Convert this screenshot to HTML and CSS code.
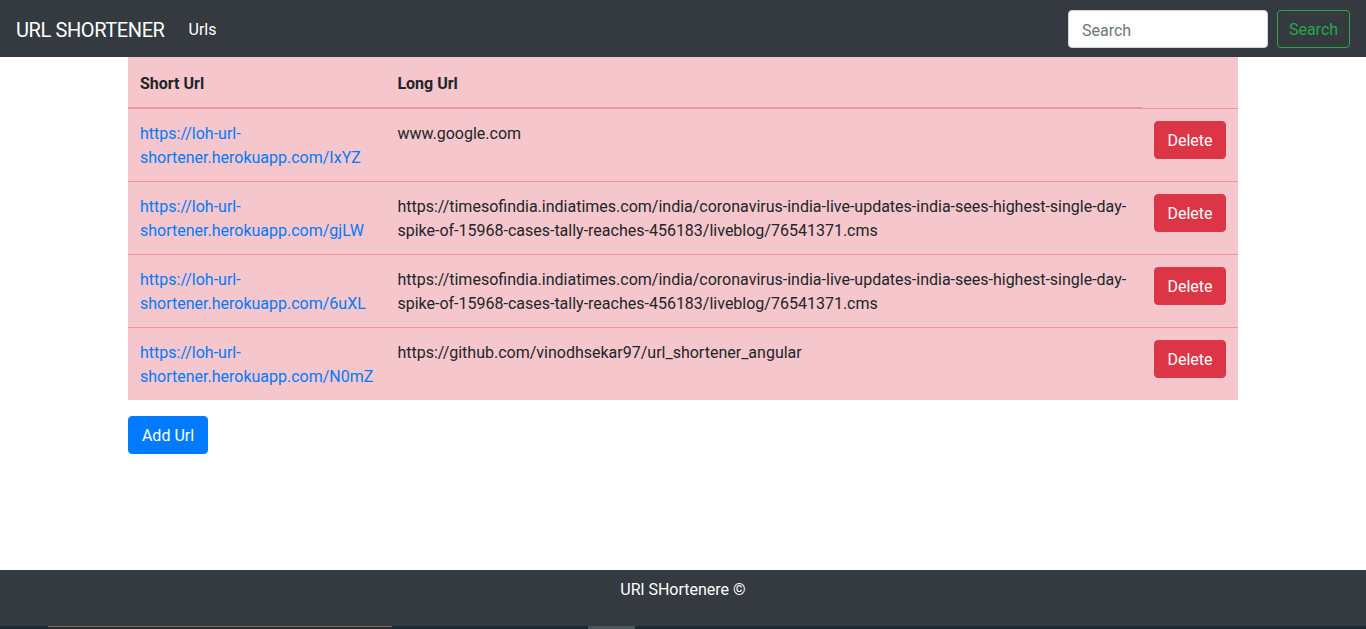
FILE: index.html
```html
<!DOCTYPE html>
<html lang="en">
<head>
<meta charset="utf-8">
<title>URL SHORTENER</title>
<link rel="stylesheet" href="styles.css">
</head>
<body>
<nav class="navbar">
  <a class="brand" href="#">URL SHORTENER</a>
  <ul class="nav">
    <li><a class="nav-link" href="#">Urls</a></li>
  </ul>
  <form class="search">
    <input class="search-input" type="text" placeholder="Search">
    <button class="btn btn-outline-success" type="button">Search</button>
  </form>
</nav>
<main class="container">
  <table class="table">
    <colgroup>
      <col class="col-short">
      <col class="col-long">
      <col class="col-action">
    </colgroup>
    <thead>
      <tr><th>Short Url</th><th>Long Url</th></tr>
    </thead>
    <tbody>
      <tr>
        <td><a href="#">https://loh-url-shortener.herokuapp.com/IxYZ</a></td>
        <td>www.google.com</td>
        <td><button class="btn btn-danger" type="button">Delete</button></td>
      </tr>
      <tr>
        <td><a href="#">https://loh-url-shortener.herokuapp.com/gjLW</a></td>
        <td>https://timesofindia.indiatimes.com/india/coronavirus-india-live-updates-india-sees-highest-single-day-spike-of-15968-cases-tally-reaches-456183/liveblog/76541371.cms</td>
        <td><button class="btn btn-danger" type="button">Delete</button></td>
      </tr>
      <tr>
        <td><a href="#">https://loh-url-shortener.herokuapp.com/6uXL</a></td>
        <td>https://timesofindia.indiatimes.com/india/coronavirus-india-live-updates-india-sees-highest-single-day-spike-of-15968-cases-tally-reaches-456183/liveblog/76541371.cms</td>
        <td><button class="btn btn-danger" type="button">Delete</button></td>
      </tr>
      <tr>
        <td><a href="#">https://loh-url-shortener.herokuapp.com/N0mZ</a></td>
        <td>https://github.com/vinodhsekar97/url_shortener_angular</td>
        <td><button class="btn btn-danger" type="button">Delete</button></td>
      </tr>
    </tbody>
  </table>
  <button class="btn btn-primary btn-add" type="button">Add Url</button>
</main>
<footer class="footer">URl SHortenere ©</footer>
<div class="taskbar">
  <span class="task-box"></span>
  <span class="task-block"></span>
</div>
</body>
</html>
```
FILE: styles.css
```css
html, body {
  margin: 0;
  padding: 0;
}
body {
  font-family: Roboto, "Noto Sans", "Liberation Sans", sans-serif;
  font-size: 16px;
  line-height: 24px;
  color: #212529;
  background: #fff;
  display: flex;
  flex-direction: column;
  min-height: 100vh;
}
.navbar {
  height: 57px;
  box-sizing: border-box;
  background: #343a40;
  display: flex;
  align-items: center;
  padding: 0 16px 0 16px;
  flex: none;
}
.brand {
  font-size: 20px;
  line-height: 30px;
  padding-top: 2px;
  letter-spacing: -0.4px;
  color: #fff;
  text-decoration: none;
  margin-right: 16px;
}
.nav {
  list-style: none;
  margin: 0;
  padding: 0;
  display: flex;
}
.nav-link {
  display: block;
  padding: 10px 8px 8px 8px;
  color: #fff;
  text-decoration: none;
}
.search {
  margin: 0 0 0 auto;
  display: flex;
  align-items: center;
}
.search-input {
  width: 200px;
  height: 38px;
  box-sizing: border-box;
  padding: 8px 12px 4px 13px;
  border: 1px solid #ced4da;
  border-radius: 4px;
  font: inherit;
  color: #495057;
  margin: 0 9px 0 2px;
  background: #fff;
}
.search-input::placeholder {
  color: #6c757d;
}
.btn {
  font: inherit;
  line-height: 24px;
  padding: 7px 12px 5px 12px;
  border: 1px solid transparent;
  border-radius: 4px;
  height: 38px;
  box-sizing: border-box;
  cursor: pointer;
}
.btn-outline-success {
  color: #28a745;
  border-color: #28a745;
  background: transparent;
  width: 73px;
  padding-left: 0;
  padding-right: 0;
  text-align: center;
}
.btn-danger {
  color: #fff;
  background: #dc3545;
  border-color: #dc3545;
  width: 72px;
  padding-left: 0;
  padding-right: 0;
  text-align: center;
}
.btn-primary {
  color: #fff;
  background: #007bff;
  border-color: #007bff;
}
.btn-add {
  width: 80px;
  padding-left: 0;
  padding-right: 0;
  text-align: center;
}
.container {
  width: 1110px;
  margin: 0 auto;
  flex: 1;
}
.table {
  width: 100%;
  border-collapse: collapse;
  background: #f5c6cb;
  margin-bottom: 16px;
}
.col-short { width: 256px; }
.col-action { width: 96px; }
.table th,
.table td {
  padding: 13px 12px 11px 12px;
  vertical-align: top;
  text-align: left;
  border-top: 1px solid #ed969e;
}
.table thead th {
  vertical-align: bottom;
  font-weight: 700;
  padding: 14px 12px 11px 12px;
  border-top-color: #f5c6cb;
  border-bottom: 2px solid #ed969e;
}
.table td .btn {
  margin-top: -1px;
}
.table a {
  color: #007bff;
  text-decoration: none;
}
.footer {
  flex: none;
  background: #343a40;
  color: #fff;
  text-align: center;
  padding: 8px 0 24px 0;
  line-height: 24px;
}
.taskbar {
  flex: none;
  height: 3px;
  background: #1b2a31;
  display: flex;
}
.task-box {
  margin-left: 48px;
  width: 344px;
  box-sizing: border-box;
  border-top: 1px solid #6a6a6a;
  background: #2b2b2d;
}
.task-block {
  margin-left: 196px;
  width: 47px;
  background: #4a5459;
}
```
